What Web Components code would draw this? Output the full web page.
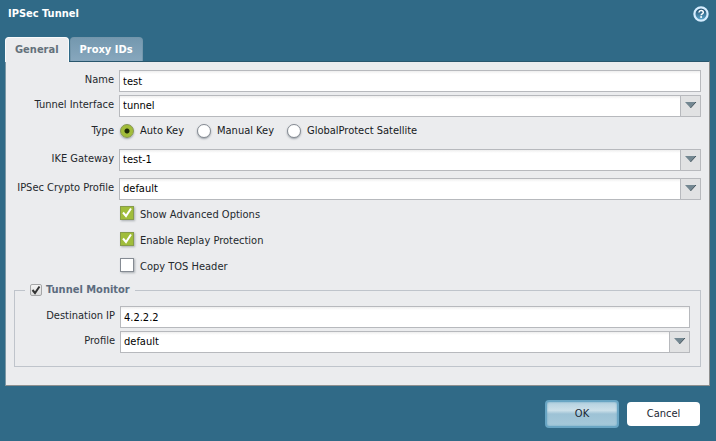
<!DOCTYPE html>
<html lang="en">
<head>
<meta charset="utf-8">
<title>IPSec Tunnel</title>
<style>
  body { margin: 0; background: #306a87; font: 11px/16px "DejaVu Sans Condensed", "Noto Sans", sans-serif; color: #1c2024; }
</style>
</head>
<body>
<dialog-window heading="IPSec Tunnel">
  <tab-strip slot="tabs">
    <tab-item selected>General</tab-item>
    <tab-item>Proxy IDs</tab-item>
  </tab-strip>
  <field-stack>
    <text-field label="Name" value="test"></text-field>
    <select-field label="Tunnel Interface" value="tunnel"></select-field>
    <radio-field label="Type" options="Auto Key|Manual Key|GlobalProtect Satellite"></radio-field>
    <select-field label="IKE Gateway" value="test-1"></select-field>
    <select-field class="apart" label="IPSec Crypto Profile" value="default"></select-field>
  </field-stack>
  <check-stack>
    <check-field label="Show Advanced Options" checked></check-field>
    <check-field label="Enable Replay Protection" checked></check-field>
    <check-field label="Copy TOS Header"></check-field>
  </check-stack>
  <monitor-group label="Tunnel Monitor">
    <field-stack>
      <text-field label="Destination IP" value="4.2.2.2"></text-field>
      <select-field label="Profile" value="default"></select-field>
    </field-stack>
  </monitor-group>
  <push-button slot="actions" primary label="OK"></push-button>
  <push-button slot="actions" label="Cancel"></push-button>
</dialog-window>

<script>
const define = (name, render) => customElements.define(name, class extends HTMLElement {
  constructor() {
    super();
    this.attachShadow({ mode: "open" }).innerHTML =
      "<style>*{box-sizing:border-box}button,input,select{font:inherit;margin:0}</style>" + render(this);
  }
});
const attr = (el, name) => el.getAttribute(name) || "";

define("dialog-window", el => `
  <style>
    :host { display: flex; flex-direction: column; min-height: 100vh; box-sizing: border-box; padding: 0 6px 0 5px; }
    header { display: flex; justify-content: space-between; align-items: center; height: 28px; padding: 0 1px 0 3px; }
    h1 { margin: 0; font-size: 11px; color: #fff; }
    .help { border: 0; padding: 0; background: none; width: 16px; height: 16px; }
    svg { display: block; }
    nav { padding-top: 9px; }
    main { background: #ebecee; border: 1px solid #8d8f8f; border-top-color: #29566d; border-left-color: #7b98a6; padding: 8px 8px 18px; }
    footer { display: flex; justify-content: flex-end; align-items: center; gap: 8px; padding: 14px 10px 12px; }
  </style>
  <header>
    <h1>${attr(el, "heading")}</h1>
    <button class="help" aria-label="Help">
      <svg width="16" height="16" viewBox="0 0 16 16">
        <defs><linearGradient id="g" x2="0" y2="1"><stop stop-color="#1a4260"/><stop offset="1" stop-color="#62aed4"/></linearGradient></defs>
        <circle cx="8" cy="8" r="6.6" fill="url(#g)" stroke="#d5edff" stroke-width="2.2"/>
        <path d="M5.900 6.500C6.100 5.200 7 4.600 8.100 4.600c1.300 0 2.200.7 2.200 1.800 0 1.500-2.100 1.500-2.200 2.900" fill="none" stroke="#fff" stroke-width="1.500"/>
        <circle cx="8.100" cy="11.100" r="1" fill="#fff"/>
      </svg>
    </button>
  </header>
  <nav><slot name="tabs"></slot></nav>
  <main><slot></slot></main>
  <footer><slot name="actions"></slot></footer>`);

define("tab-strip", () => `
  <style>:host { display: flex; gap: 1px; }</style><slot></slot>`);

define("tab-item", el => `
  <style>
    :host { display: block; }
    button { display: block; height: 24px; padding: 0 9px; border: 1px solid #7396ab; border-bottom: 0;
      border-radius: 4px 4px 0 0; background: linear-gradient(#7498af, #87a7bd); color: #fff; font-weight: bold; line-height: 22px; }
    :host([selected]) { margin-bottom: -1px; position: relative; }
    :host([selected]) button { height: 25px; background: #ebecee; border-color: #f8fafb; color: #64717b; }
  </style>
  <button role="tab" aria-selected="${el.hasAttribute("selected")}"><slot></slot></button>`);

define("field-stack", () => `
  <style>
    :host { display: flex; flex-direction: column; gap: 3px; }
    ::slotted(.apart) { margin-top: 4px; }
  </style><slot></slot>`);

const fieldCss = `
  :host { display: grid; grid-template-columns: var(--label-width, 100px) 1fr; column-gap: 5px; }
  .label { text-align: right; line-height: 20px; white-space: nowrap; color: #24282c; }
  .control { min-width: 0; width: 100%; height: 22px; border: 1px solid #b7b9bd; border-radius: 0; padding: 0 3px;
    background: linear-gradient(#eee, #fff 3px); color: #000; line-height: 20px; }`;

define("text-field", el => `
  <style>${fieldCss}</style>
  <label class="label" for="f">${attr(el, "label")}</label>
  <input class="control" id="f" value="${attr(el, "value")}">`);

define("select-field", el => `
  <style>${fieldCss}
    select { appearance: none; }
    .box { display: grid; grid-template-columns: 1fr 21px; }
    select { grid-area: 1 / 1 / 2 / 3; }
    svg { grid-area: 1 / 2; pointer-events: none; width: 21px; height: 22px; }
  </style>
  <label class="label" for="f">${attr(el, "label")}</label>
  <div class="box">
    <select class="control" id="f"><option>${attr(el, "value")}</option></select>
    <svg viewBox="0 0 21 22"><path d="M.5.5h20v21H.5z" fill="#e1e2e3" stroke="#b7b9bd"/><path d="M5 7h11l-5.500 6z" fill="#738791"/><path d="M16 7l-5.500 6" stroke="#46565f"/></svg>
  </div>`);

define("radio-field", el => `
  <style>${fieldCss}
    :host { height: 26px; }
    .label { line-height: 22px; }
    .set { display: flex; gap: 12px; }
    .set label { display: flex; align-items: center; gap: 6px; height: 22px; white-space: nowrap; color: #16191c; }
    input { appearance: none; width: 14px; height: 14px; border: 1px solid #858b93; border-radius: 50%; background: #fff;
      box-shadow: 0 1px 2px #9ba1a8; margin-left: 1px; }
    input:checked { background: radial-gradient(circle, #1f2c07 2px, #a2bd3a 3px); border-color: #849451; }
  </style>
  <span class="label" id="t">${attr(el, "label")}</span>
  <div class="set" role="radiogroup" aria-labelledby="t">
    ${attr(el, "options").split("|").map((o, i) => `<label><input type="radio" name="type"${i ? "" : " checked"}>${o}</label>`).join("")}
  </div>`);

define("check-stack", () => `
  <style>:host { display: flex; flex-direction: column; gap: 4px; padding: 3px 0 0 106px; }</style><slot></slot>`);

define("check-field", el => `
  <style>
    :host { display: block; }
    label { display: inline-grid; grid-template-columns: 14px auto; column-gap: 6px; height: 22px; color: #24292d; }
    .text { line-height: 24px; }
    input, svg { grid-area: 1 / 1; width: 14px; height: 14px; margin-top: 3px; }
    input { appearance: none; border: 1px solid #858b93; background: #fff; box-shadow: 1px 1px 2px #a9adb2; }
    input:checked { background: #a0bd3b; border-color: #879c49; }
    svg { pointer-events: none; display: none; }
    input:checked + svg { display: block; }
  </style>
  <label><input type="checkbox"${el.hasAttribute("checked") ? " checked" : ""}><svg viewBox="0 0 14 14"><path d="M3 6.500l3 3.500 5-7.500" fill="none" stroke="#fff" stroke-width="2"/></svg><span class="text">${attr(el, "label")}</span></label>`);

define("monitor-group", el => `
  <style>
    :host { display: block; padding-top: 5px; --label-width: 92px; }
    fieldset { margin: 0; min-width: 0; border: 1px solid #bfc4cb; padding: 8px 10px 13px 8px; }
    legend { margin-left: 2px; padding: 0 5px; }
    legend label { display: flex; align-items: center; gap: 4px; height: 16px; font-weight: bold; color: #5c6c7f; }
    .tick { display: grid; }
    input, svg { grid-area: 1 / 1; width: 12px; height: 12px; }
    input { appearance: none; border: 1px solid #a5a6a7; border-radius: 2px; background: linear-gradient(#f4f4f4, #dcdcdc); }
    svg { pointer-events: none; visibility: hidden; }
    input:checked + svg { visibility: visible; }
  </style>
  <fieldset>
    <legend><label><span class="tick"><input type="checkbox" checked><svg viewBox="0 0 12 12"><path d="M2.500 6l2.500 3 4.500-6.500" fill="none" stroke="#333" stroke-width="2"/></svg></span>${attr(el, "label")}</label></legend>
    <slot></slot>
  </fieldset>`);

define("push-button", el => `
  <style>
    :host { display: block; }
    button { display: block; width: 73px; height: 24px; border: 0; border-radius: 4px; background: #fff; color: #1b2733; padding: 0; }
    :host([primary]) button { width: 74px; height: 28px; border: 2px solid #68a5c3; border-radius: 4px;
      background: linear-gradient(#b3d0df, #cce0e9 35%, #9dc2d5 50%, #a5c9da); box-shadow: inset 0 0 2px #68a5c3; }
  </style>
  <button>${attr(el, "label")}</button>`);
</script>
</body>
</html>
